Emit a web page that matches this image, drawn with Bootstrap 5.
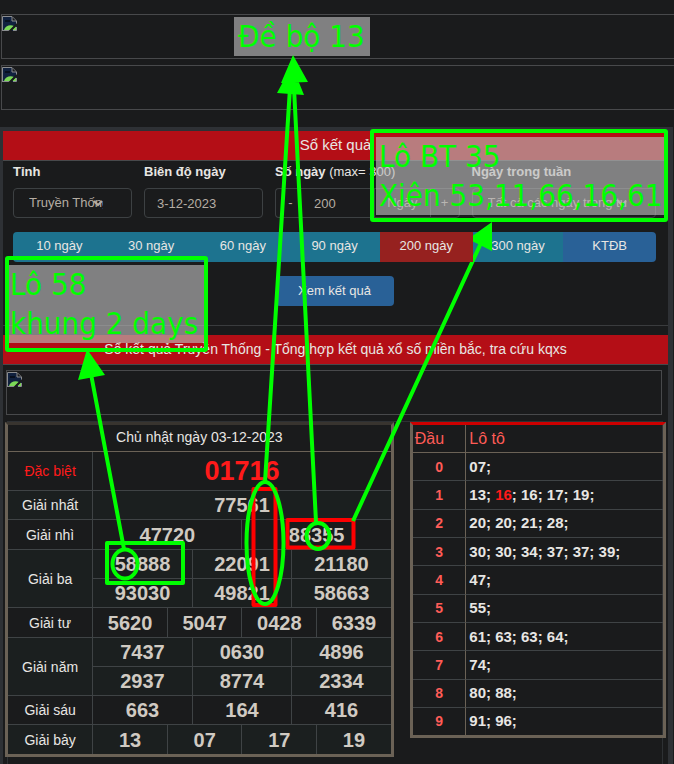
<!DOCTYPE html>
<html lang="vi">
<head>
<meta charset="utf-8">
<meta name="viewport" content="width=device-width, initial-scale=1">
<title>Sổ kết quả Truyền Thống</title>
<link href="https://cdn.jsdelivr.net/npm/bootstrap@5.3.0/dist/css/bootstrap.min.css" rel="stylesheet">
<style>
  body { background: #1a1b1c; color: #e8e6e3; font: 14px/20px "Liberation Sans", Arial, sans-serif; overflow-x: hidden; }
  .page { min-height: 100vh; padding-top: 14px; }
  .ad-slot { height: 45px; border: 1px solid #48494b; padding: 1px 0; }
  .ad-slot svg { display: block; width: 16px; height: 16px; }
  .ad-top { margin: 0 -2px 6px 1px; }
  .ad-inner { margin: 5px 6px 6px 3px; }
  .frame { margin: 11px 1px 0 0; border: solid #2e3135; border-width: 4px 5px 0 3px; }
  .heading { background: #b40e16; font-size: 15px; line-height: 22px; padding: 3px 8px 4px; border-bottom: 1px solid #48494b; margin: 0; font-weight: 400; }
  h2.heading { font-size: 14px; }
  .search { border-bottom: 1px solid #3a3c3e; padding: 1px 12px 19px 10px; margin-bottom: 9px; }
  .fields { --bs-gutter-x: 12px; margin-bottom: 14px; }
  .w-20 { width: 20%; } .w-30 { width: 30%; }
  .fields label { font-size: 13px; font-weight: 700; line-height: 20px; margin-bottom: 6px; display: block; white-space: nowrap; }
  .fields .form-control, .fields .form-select, .fields .input-group-text, .step {
    height: 30px; padding: 0 12px; font-size: 13px; color: #b5ada3; background-color: transparent; border: 1px solid #3d4143; border-radius: 4px; }
  .fields .form-select { padding: 0 28px 0 15px; text-overflow: clip; background-size: 10px 10px; background-position: right 28px center;
    background-image: url("data:image/svg+xml,%3Csvg xmlns='http://www.w3.org/2000/svg' viewBox='0 0 10 10'%3E%3Cpath d='M1 3l4 4 4-4' fill='none' stroke='%23b5ada3' stroke-width='2'/%3E%3C/svg%3E"); }
  .fields .form-select option { background: #1a1b1c; }
  .fields .input-group .step { width: 30px; padding: 0; }
  .fields .input-group .first { border-right: 0; }
  .fields .input-group .qty { border-left: 0; padding-left: 10px; }
  .periods .btn, .submit { --bs-btn-color: #e8e6e3; --bs-btn-bg: #1d738f; --bs-btn-hover-bg: #23829f; --bs-btn-hover-color: #fff; font-size: 13px; line-height: 20px; padding: 5px 0; border: 0; border-radius: 4px; }
  .periods .btn { flex: 1 1 0; padding: 4px 0 6px; }
  .periods .active { --bs-btn-active-bg: #96211f; --bs-btn-active-color: #e8e6e3; }
  .periods .blue, .submit { --bs-btn-bg: #296197; }
  .submit { width: 118px; margin-top: 14px; }
  .results { border: 1px solid #2e3134; border-bottom: 0; margin: 0 5px 0 4px; min-height: 342px; }
  .boards { margin: 0 -4px 0 -3px; gap: 16px; }
  .board { border: 3px solid #6b6256; min-width: 0; }
  .prizes { flex: 390 1 0; border-top-color: #38342f; }
  .heads { flex: 255 1 0; border-top-color: #cc0000; }
  .board table { width: 100%; table-layout: fixed; border-collapse: separate; border-spacing: 0; }
  .board th, .board td { padding: 0; border: 0 solid #3f4345; border-bottom-width: 1px; }
  .board tbody tr:last-child > * { border-bottom: 0; }
  .board td { border-left-width: 1px; }
  .board thead th { border-bottom-color: #6b6256; font-weight: 400; }
  .prizes tbody th { font-weight: 400; }
  .prizes tr { height: 29px; text-align: center; }
  .prizes td { font-size: 20px; line-height: 28px; font-weight: 700; color: #d0cac2; }
  .prizes .tint { background: #1b1f1f; }
  .prizes thead tr { height: 27px; }
  .prizes thead th { padding-bottom: 3px; }
  .prizes .taller { height: 30px; }
  .prizes .jackpot { height: 39px; }
  .prizes .jackpot > * { color: #ff1a1a; }
  .prizes .jackpot td { font-size: 27px; }
  .heads table { height: 310px; }
  .heads th { color: #ff5c57; text-align: center; }
  .heads thead th { font-size: 16px; text-align: left; padding-left: 2px; height: 28px; }
  .heads td, .heads thead th + th { padding-left: 3px; border-left: 1px solid #6b6256; }
  .heads td { font-size: 15px; font-weight: 700; }
  .hit { color: #ff1a1a; }
  .notes { position: absolute; top: 0; left: 0; pointer-events: none; }
  .note { position: absolute; margin: 0; background: rgba(186,186,186,.64); color: #00ff00; font: 31px/39px "DejaVu Sans Condensed", "DejaVu Sans", sans-serif; padding-left: 4px; white-space: nowrap; pointer-events: none; }
  .note-a { left: 234px; top: 17px; width: 136px; }
  .note-b { left: 376px; top: 137px; width: 288px; padding-left: 3px; }
  .note-c { left: 9px; top: 265px; width: 195px; padding-left: 1px; }
</style>
<script src="https://cdn.jsdelivr.net/npm/bootstrap@5.3.0/dist/js/bootstrap.bundle.min.js"></script>
</head>
<body>
<svg width="0" height="0" class="position-absolute" aria-hidden="true">
  <symbol id="broken" viewBox="0 0 16 16">
    <path d="M1 1h9l5 5v9H1z" fill="#10213f"/>
    <path d="M3 4h5v2H3z" fill="#07101f"/>
    <path d="M2 14c1-4 6-6 10-4l-4 4z" fill="#7bd957"/>
    <path d="M10 14l4-4v4z" fill="#7bd957"/>
    <path d="M.5 15V.5H10L14.500 5v3M.5 14.500H8M11 14.500h3.500V11" fill="none" stroke="#8b8d90"/>
    <path d="M10 1v4h4" fill="#1a1b1c" stroke="#8b8d90"/>
    <path d="M7 16l8-8" stroke="#1a1b1c" stroke-width="2"/>
  </symbol>
</svg>
<div class="page d-flex flex-column position-relative">
  <div class="ad-slot ad-top"><svg role="img" aria-label="Quảng cáo"><use href="#broken"/></svg></div>
  <div class="ad-slot ad-top"><svg role="img" aria-label="Quảng cáo"><use href="#broken"/></svg></div>
  <main class="frame flex-grow-1 d-flex flex-column">
    <h1 class="heading text-center">Sổ kết quả</h1>
    <form class="search" onsubmit="return false">
      <div class="row fields">
        <div class="w-20"><label for="province">Tỉnh</label>
          <select id="province" class="form-select"><option>Truyền Thống</option></select></div>
        <div class="w-20"><label for="date">Biên độ ngày</label>
          <input id="date" class="form-control" value="3-12-2023"></div>
        <div class="w-30"><label for="days">Số ngày <span class="fw-normal">(max= 300)</span></label>
          <div class="input-group flex-nowrap">
            <button type="button" class="step first">-</button>
            <input id="days" class="form-control qty" value="200">
            <span class="input-group-text">Ngày</span>
            <button type="button" class="step">+</button>
          </div></div>
        <div class="w-30"><label for="weekday">Ngày trong tuần</label>
          <select id="weekday" class="form-select"><option>Tất cả các ngày trong tuần</option></select></div>
      </div>
      <div class="btn-group d-flex periods">
        <button type="button" class="btn">10 ngày</button>
        <button type="button" class="btn">30 ngày</button>
        <button type="button" class="btn">60 ngày</button>
        <button type="button" class="btn">90 ngày</button>
        <button type="button" class="btn active">200 ngày</button>
        <button type="button" class="btn">300 ngày</button>
        <button type="button" class="btn blue">KTĐB</button>
      </div>
      <div class="text-center"><button type="submit" class="btn submit">Xem kết quả</button></div>
    </form>
    <h2 class="heading text-center">Sổ kết quả Truyền Thống - Tổng hợp kết quả xổ số miền bắc, tra cứu kqxs</h2>
    <div class="ad-slot ad-inner"><svg role="img" aria-label="Quảng cáo"><use href="#broken"/></svg></div>
    <section class="results flex-grow-1">
      <div class="boards d-flex align-items-start">
        <div class="board prizes">
          <table>
            <colgroup><col style="width:22%"><col span="12"></colgroup>
            <thead><tr><th colspan="13">Chủ nhật ngày 03-12-2023</th></tr></thead>
            <tbody>
              <tr class="jackpot"><th>Đặc biệt</th><td colspan="12">01716</td></tr>
              <tr class="tint"><th>Giải nhất</th><td colspan="12">77561</td></tr>
              <tr class="taller"><th>Giải nhì</th><td colspan="6">47720</td><td colspan="6">88355</td></tr>
              <tr class="tint"><th rowspan="2">Giải ba</th><td colspan="4">58888</td><td colspan="4">22091</td><td colspan="4">21180</td></tr>
              <tr class="tint"><td colspan="4">93030</td><td colspan="4">49821</td><td colspan="4">58663</td></tr>
              <tr class="taller"><th>Giải tư</th><td colspan="3">5620</td><td colspan="3">5047</td><td colspan="3">0428</td><td colspan="3">6339</td></tr>
              <tr class="tint"><th rowspan="2">Giải năm</th><td colspan="4">7437</td><td colspan="4">0630</td><td colspan="4">4896</td></tr>
              <tr class="tint"><td colspan="4">2937</td><td colspan="4">8774</td><td colspan="4">2334</td></tr>
              <tr><th>Giải sáu</th><td colspan="4">663</td><td colspan="4">164</td><td colspan="4">416</td></tr>
              <tr class="tint"><th>Giải bảy</th><td colspan="3">13</td><td colspan="3">07</td><td colspan="3">17</td><td colspan="3">19</td></tr>
            </tbody>
          </table>
        </div>
        <div class="board heads">
          <table>
            <colgroup><col style="width:21%"><col></colgroup>
            <thead><tr><th>Đầu</th><th>Lô tô</th></tr></thead>
            <tbody>
              <tr><th>0</th><td>07;</td></tr>
              <tr><th>1</th><td>13; <span class="hit">16</span>; 16; 17; 19;</td></tr>
              <tr><th>2</th><td>20; 20; 21; 28;</td></tr>
              <tr><th>3</th><td>30; 30; 34; 37; 37; 39;</td></tr>
              <tr><th>4</th><td>47;</td></tr>
              <tr><th>5</th><td>55;</td></tr>
              <tr><th>6</th><td>61; 63; 63; 64;</td></tr>
              <tr><th>7</th><td>74;</td></tr>
              <tr><th>8</th><td>80; 88;</td></tr>
              <tr><th>9</th><td>91; 96;</td></tr>
            </tbody>
          </table>
        </div>
      </div>
    </section>
  </main>

  <p class="note note-a">Đề bộ 13</p>
  <p class="note note-b">Lô BT 35<br>Xiên 53,11,66,16,61</p>
  <p class="note note-c">Lô 58<br>khung 2 days</p>
  <svg class="notes" width="674" height="764" viewBox="0 0 674 764" fill="none" stroke-width="4" stroke-linejoin="round" aria-hidden="true">
    <g stroke="#ff0000">
      <rect x="253.500" y="489" width="22" height="116"/>
      <rect x="287.500" y="520" width="66" height="27.500"/>
    </g>
    <g stroke="#00ff00">
      <rect x="372" y="131" width="294" height="89" rx="1"/>
      <rect x="7" y="258" width="199" height="92" rx="1"/>
      <rect x="107" y="543" width="76" height="40"/>
      <ellipse cx="265" cy="543" rx="18.500" ry="61"/>
      <ellipse cx="318" cy="536" rx="11.500" ry="13"/>
      <ellipse cx="125" cy="564" rx="12.500" ry="14.500"/>
      <path d="M265 482L290 88M316 522L294 88M353 521L481 243M124 549L91 374"/>
    </g>
    <path fill="#00ff00" d="M293 55l15 27-27 1zM292 65l12 30-27-2zM492 222v29l-24-12zM87 349l18 26-27 5z"/>
  </svg>
</div>
</body>
</html>
